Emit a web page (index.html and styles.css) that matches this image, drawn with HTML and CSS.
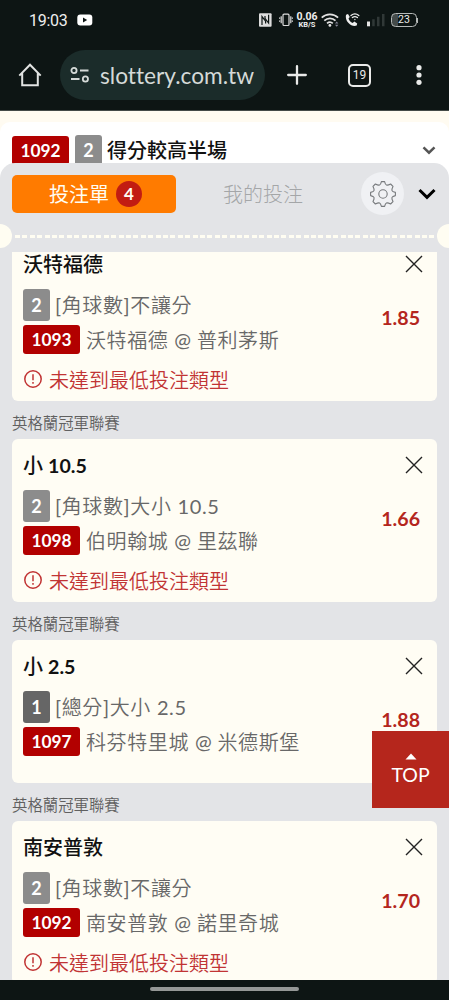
FILE: index.html
```html
<!DOCTYPE html>
<html lang="zh-Hant">
<head>
<meta charset="utf-8">
<title>投注單</title>
<link rel="stylesheet" href="styles.css">
</head>
<body>
<div class="phone">
  <header class="status">
    <span class="clock">19:03</span>
    <svg class="yt" width="16" height="12" viewBox="0 0 16 12"><rect x=".3" y=".5" width="15" height="11" rx="3" fill="#fff"/><path d="M6 3.6v4.8L10.2 6z" fill="#0d1514"/></svg>
    <svg class="nfc" width="13" height="14" viewBox="0 0 13 14"><rect y=".2" width="12.6" height="13.5" rx="1" fill="#ddd"/><path d="M3 12V3.6l3.6 4.6v2.4M6 3v2.4l3.6 4.6V1.8" fill="none" stroke="#0d1514" stroke-width="1.2"/></svg>
    <svg class="vib" width="14" height="14" viewBox="0 0 14 14" fill="none" stroke="#ddd" stroke-width="1.2"><rect x="4" y="1.2" width="6" height="11.3" rx="1"/><path d="M2.2 3.2v7M.6 4.5v1.2M.6 7.5v1.2M11.8 3.2v7M13.4 4.5v1.2M13.4 7.5v1.2"/></svg>
    <span class="speed"><b>0.06</b><i>KB/S</i></span>
    <svg class="wifi" width="19" height="15" viewBox="0 0 19 15" fill="none" stroke="#e2e2e2" stroke-width="1.7"><path d="M.7 4.7c4.6-4.5 11.8-4.5 16.4 0M3.3 7.6c3.3-3.1 8.1-3.1 11.2 0M6 10.3c1.9-1.6 4-1.6 5.8 0"/><circle cx="8.9" cy="12.4" r="1.4" fill="#e2e2e2" stroke="none"/><path d="M14 10.5l1.7-2 1.7 2zM14 11.7l1.7 2 1.7-2z" fill="#889" stroke="none"/></svg>
    <svg class="call" width="15" height="14" viewBox="0 0 15 14"><path d="M1.1 1.7L3 1.1l1.8 3-1.3 1.5c.8 2.2 2 3.6 4.2 4.4L9.3 8.6l2.9 1.8-.5 2.2C5.8 14.5-.6 7.5 1.1 1.7z" fill="#eee"/><path d="M6 2.5c2.4-2 5.4-2 7.8 0M7.4 4.5c1.6-1.2 3.4-1.2 5 0M9.9 6.5v.1" fill="none" stroke="#eee" stroke-width="1.3" stroke-linecap="round"/></svg>
    <svg class="signal" width="18" height="14" viewBox="0 0 18 14"><path fill="#e4e4e4" d="M0 8.5h3v4.8H0z"/><path fill="#303837" d="M5.2 6.3h2.5v7H5.2zM10 3.8h2.5v9.5H10zM15 1h2.5v12.3H15z"/></svg>
    <span class="battery">23</span>
    <span class="battery-tip"></span>
  </header>
  <div class="toolbar">
    <svg class="home" width="24" height="24" viewBox="0 0 24 24" fill="none" stroke="#e2e4e3" stroke-width="2"><path d="M1.3 12.6L12 1.7l10.7 10.9M4.2 10v12.2h15.6V10"/></svg>
    <div class="url">
      <svg width="20" height="16" viewBox="0 0 20 16" fill="none" stroke="#d5dad8" stroke-width="1.8"><circle cx="4" cy="3.5" r="2.6"/><path d="M10 3.5h8.5M1 12h8.5"/><circle cx="15.4" cy="12" r="2.6"/></svg>
      <span>slottery.com.tw</span>
    </div>
    <svg class="plus" width="20" height="20" viewBox="0 0 20 20" stroke="#e9eae9" stroke-width="2.3" stroke-linecap="round"><path d="M1.2 10h17.6M10 1.2v17.6"/></svg>
    <span class="tabs-count">19</span>
    <svg class="more" width="6" height="20" viewBox="0 0 6 20" fill="#e9eae9"><circle cx="3" cy="2.7" r="2.6"/><circle cx="3" cy="10" r="2.6"/><circle cx="3" cy="17.3" r="2.6"/></svg>
  </div>

  <main class="page">
    <section class="market">
      <span class="code">1092</span><span class="leg">2</span>
      <span class="market-name">得分較高半場</span>
      <svg class="market-arrow" width="14" height="9" viewBox="0 0 14 9" fill="none" stroke="#555" stroke-width="2.5"><path d="M1.5 1.3L7 6.7l5.5-5.4"/></svg>
    </section>
    <section class="slip">
      <nav class="slip-head">
        <button class="tab-active">投注單<span class="count">4</span></button>
        <span class="tab">我的投注</span>
        <span class="settings"><svg width="28" height="28" viewBox="-14 -14 28 28" fill="none" stroke="#777a7d" stroke-width="1.1" stroke-linejoin="round"><circle r="4.2"/><path d="M-1.6 -12.4H1.6Q2.3 -9.4 3.4 -9Q4.8 -8.5 7.6 -10L10 -7.6Q8.5 -4.8 9 -3.4Q9.4 -2.3 12.4 -1.6V1.6Q9.4 2.3 9 3.4Q8.5 4.8 10 7.6L7.6 10Q4.8 8.5 3.4 9Q2.3 9.4 1.6 12.4H-1.6Q-2.3 9.4 -3.4 9Q-4.8 8.5 -7.6 10L-10 7.6Q-8.5 4.8 -9 3.4Q-9.4 2.3 -12.4 1.6V-1.6Q-9.4 -2.3 -9 -3.4Q-8.5 -4.8 -10 -7.6L-7.6 -10Q-4.8 -8.5 -3.4 -9Q-2.3 -9.4 -1.6 -12.4Z"/></svg></span>
        <svg class="collapse" width="18" height="12" viewBox="0 0 18 12" fill="none" stroke="#000" stroke-width="3"><path d="M1.5 2L9 9.3 16.5 2"/></svg>
      </nav>
      <div class="tear"><i></i><span></span><i></i></div>
      <div class="bets">
        <article class="bet first">
          <div class="bet-title"><span>沃特福德</span><svg class="close" viewBox="0 0 18 18"><path d="M1 1l16 16M17 1L1 17"/></svg></div>
          <div class="bet-body"><div class="lines">
            <p><span class="leg">2</span><span class="num">[</span>角球數<span class="num">]</span>不讓分</p>
            <p><span class="code">1093</span>沃特福德<span class="at">@</span>普利茅斯</p></div><b class="odds">1.85</b></div>
          <div class="warn"><svg viewBox="0 0 18 18"><circle cx="9" cy="9" r="8.2"/><path d="M9 4.3v5.9M9 12v1.8"/></svg>未達到最低投注類型</div>
        </article>
        <h3>英格蘭冠軍聯賽</h3>
        <article class="bet">
          <div class="bet-title"><span>小 <b>10.5</b></span><svg class="close" viewBox="0 0 18 18"><path d="M1 1l16 16M17 1L1 17"/></svg></div>
          <div class="bet-body"><div class="lines">
            <p><span class="leg">2</span><span class="num">[</span>角球數<span class="num">]</span>大小 <span class="num">10.5</span></p>
            <p><span class="code">1098</span>伯明翰城<span class="at">@</span>里茲聯</p></div><b class="odds">1.66</b></div>
          <div class="warn"><svg viewBox="0 0 18 18"><circle cx="9" cy="9" r="8.2"/><path d="M9 4.3v5.9M9 12v1.8"/></svg>未達到最低投注類型</div>
        </article>
        <h3>英格蘭冠軍聯賽</h3>
        <article class="bet short">
          <div class="bet-title"><span>小 <b>2.5</b></span><svg class="close" viewBox="0 0 18 18"><path d="M1 1l16 16M17 1L1 17"/></svg></div>
          <div class="bet-body"><div class="lines">
            <p><span class="leg dark">1</span><span class="num">[</span>總分<span class="num">]</span>大小 <span class="num">2.5</span></p>
            <p><span class="code">1097</span>科芬特里城<span class="at">@</span>米德斯堡</p></div><b class="odds">1.88</b></div>
        </article>
        <h3>英格蘭冠軍聯賽</h3>
        <article class="bet">
          <div class="bet-title"><span>南安普敦</span><svg class="close" viewBox="0 0 18 18"><path d="M1 1l16 16M17 1L1 17"/></svg></div>
          <div class="bet-body"><div class="lines">
            <p><span class="leg">2</span><span class="num">[</span>角球數<span class="num">]</span>不讓分</p>
            <p><span class="code">1092</span>南安普敦<span class="at">@</span>諾里奇城</p></div><b class="odds">1.70</b></div>
          <div class="warn"><svg viewBox="0 0 18 18"><circle cx="9" cy="9" r="8.2"/><path d="M9 4.3v5.9M9 12v1.8"/></svg>未達到最低投注類型</div>
        </article>
      </div>
    </section>
  </main>
  <a class="top"><svg width="12" height="7" viewBox="0 0 12 7"><path d="M.5 6.5L6 .5l5.5 6z" fill="#fff"/></svg>TOP</a>
  <footer class="gesture"><span></span></footer>
</div>
</body>
</html>
```
FILE: styles.css
```css
* { box-sizing: border-box; }
body { margin: 0; background: #0d1514; font-family: Lato, "Noto Sans CJK TC", sans-serif; }
svg { display: block; flex: none; }
.phone { position: relative; width: 449px; height: 1000px; overflow: hidden; display: flex; flex-direction: column; }

.status { height: 40px; flex: none; display: flex; align-items: center; padding-left: 29px; color: #eee; font-family: Roboto, sans-serif; }
.clock { width: 48px; font-size: 16px; letter-spacing: -.3px; }
.nfc { margin-left: 166px; }
.vib { margin-left: 7px; }
.speed { width: 22px; margin-left: 3px; text-align: center; white-space: nowrap; }
.speed b { display: block; font: bold 10.5px/9px Roboto, sans-serif; }
.speed i { display: block; font: bold 7.5px/8px Roboto, sans-serif; }
.wifi { margin-left: 3px; }
.call { margin-left: 5px; }
.signal { margin-left: 7px; }
.battery { width: 26px; height: 14px; margin-left: 6px; border: 1px solid #b5b9b8; border-radius: 4.5px; font-size: 10.5px; line-height: 12px; text-align: center; background: linear-gradient(90deg, #444b4a 6px, transparent 6px); }
.battery-tip { width: 1px; height: 5px; background: #b5b9b8; }

.toolbar { height: 70px; flex: none; display: flex; align-items: center; padding-left: 18px; }
.url { width: 205px; height: 50px; margin-left: 18px; padding-left: 10px; border-radius: 25px; background: #1b2c2a; display: flex; align-items: center; gap: 10px; color: #d5dad8; font: 22.7px Lato, sans-serif; font-variant-ligatures: none; white-space: nowrap; }
.plus { margin-left: 22px; }
.tabs-count { width: 23px; height: 23px; margin-left: 41px; border: 2px solid #e9eae9; border-radius: 5px; color: #e9eae9; font: 12px/19px Roboto, sans-serif; text-align: center; }
.more { margin-left: 45px; }

.page { height: 870px; flex: none; background: #fffbf1; overflow: hidden; border-top: 1px solid #444a48; display: flex; flex-direction: column; }
.market { height: 68px; margin: 11px 0 -27px; padding: 14px 13px 0 12px; background: #fff; border-radius: 10px 10px 0 0; display: flex; flex: none; align-items: flex-start; }
.code, .leg { display: inline-block; flex: none; color: #fff; font-weight: 700; text-align: center; border-radius: 3px; }
.code { width: 57px; height: 29px; background: #b20000; font-size: 17.3px; line-height: 29px; }
.leg { width: 27px; height: 32px; background: #8c8c8c; font-size: 18px; line-height: 32px; }
.leg.dark { background: #666; }
.market .leg { margin: -1px 5px 0 6px; line-height: 30px; }
.market-name { font-size: 20px; line-height: 28px; font-weight: 500; color: #111; }
.market-arrow { margin: 10px 0 0 auto; }

.slip { position: relative; flex: 1; min-height: 0; background: #e3e4e7; border-radius: 15px 15px 0 0; display: flex; flex-direction: column; }
.slip-head { height: 61px; flex: none; display: flex; align-items: center; padding-left: 12px; }
.tab-active { width: 164px; height: 38px; border: 0; border-radius: 5px; background: #ff7b00; color: #fffdf2; font: 400 20px Lato, "Noto Sans CJK TC", sans-serif; display: flex; align-items: center; justify-content: center; gap: 7px; padding: 0 0 0 3px; }
.count { width: 26px; height: 26px; border-radius: 50%; background: #c21c12; font: 700 17px/26px Lato, sans-serif; }
.tab { width: 80px; margin-left: 47px; font-size: 20px; font-weight: 300; color: #a4a6a8; white-space: nowrap; }
.settings { width: 43px; height: 43px; margin-left: 58px; border-radius: 50%; background: #f0f1f4; display: grid; place-items: center; }
.collapse { margin-left: 14px; }
.tear { height: 24px; flex: none; display: flex; align-items: center; }
.tear i { width: 12px; height: 24px; border-radius: 0 12px 12px 0; background: #fffdf2; }
.tear i:last-child { border-radius: 12px 0 0 12px; }
.tear span { flex: 1; height: 3px; margin: 1px 0 0 3px; background: repeating-linear-gradient(90deg, #fffdf2 0 5px, transparent 5px 7.4px); }
.bets { flex: 1; min-height: 0; overflow: hidden; margin-top: 4px; padding: 0 12px; }
.bet { height: 163px; padding: 10px 11px 0; background: #fffdf4; border-radius: 6px; }
.bet.first { margin-top: -14px; }
.bet.short { height: 143px; }
.bet-title { height: 30px; display: flex; align-items: center; justify-content: space-between; font-size: 20px; font-weight: 500; color: #111; }
.bet-title b { font-size: 19.6px; }
.close { width: 18px; height: 18px; margin: 1px 3px 0 0; fill: none; stroke: #222; stroke-width: 1.4; }
.bet-body { height: 65px; margin-top: 11px; display: flex; justify-content: space-between; }
.lines { display: grid; grid-template-rows: 32px 29px; gap: 4px; }
.lines p { margin: 0; display: flex; align-items: center; color: #686868; font-size: 20px; line-height: 28px; font-weight: 350; letter-spacing: .6px; white-space: pre; }
.lines .num { font-weight: 400; font-size: 20px; }
.lines .at { width: 28.5px; padding-bottom: 1px; text-align: center; font-weight: 400; font-size: 20px; letter-spacing: 0; }
.lines .leg, .lines .code { margin-right: 6px; letter-spacing: 0; font-weight: 700; line-height: 30px; }
.lines .leg { margin-right: 5px; line-height: 33px; }
.odds { margin: 15px 6px 0 0; color: #b4261d; font-size: 19.6px; line-height: 28px; }
.warn { height: 28px; margin-top: 11px; display: flex; align-items: center; gap: 7px; color: #c13434; font-size: 20px; font-weight: 350; white-space: nowrap; }
.warn svg { width: 18px; height: 18px; margin-left: 1px; fill: none; stroke: #c13434; stroke-width: 1.5; }
h3 { height: 38px; margin: 0; color: #606060; font-size: 15.4px; line-height: 44px; font-weight: 350; }

.top { position: absolute; right: 0; top: 731px; width: 77px; height: 77px; background: #b5261c; color: #fff; font-size: 19.5px; line-height: 24px; display: flex; flex-direction: column; align-items: center; padding-top: 22px; gap: 3px; }
.gesture { flex: 1; background: #0d1514; padding: 7px 0 0 150px; }
.gesture span { display: block; width: 149px; height: 4px; border-radius: 2px; background: #949796; }
```
